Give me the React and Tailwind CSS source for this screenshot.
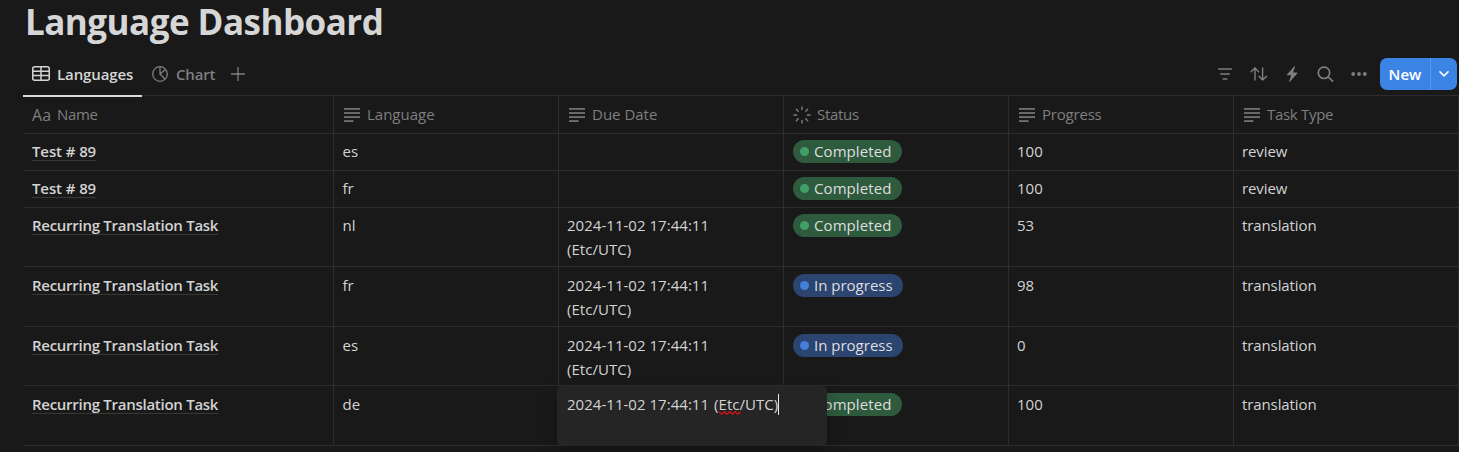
const LINE = 'border-[#2d2d2d]';

const rows = [
  { name: 'Test # 89', lang: 'es', due: '', status: 'Completed', progress: '100', type: 'review', h: 'h-[37px]', pad: 'pt-[5px]' },
  { name: 'Test # 89', lang: 'fr', due: '', status: 'Completed', progress: '100', type: 'review', h: 'h-[37px]', pad: 'pt-[5px]' },
  { name: 'Recurring Translation Task', lang: 'nl', due: '2024-11-02 17:44:11 (Etc/UTC)', status: 'Completed', progress: '53', type: 'translation', h: 'h-[59px]', pad: 'pt-[5px]' },
  { name: 'Recurring Translation Task', lang: 'fr', due: '2024-11-02 17:44:11 (Etc/UTC)', status: 'In progress', progress: '98', type: 'translation', h: 'h-[60px]', pad: 'pt-[6px]' },
  { name: 'Recurring Translation Task', lang: 'es', due: '2024-11-02 17:44:11 (Etc/UTC)', status: 'In progress', progress: '0', type: 'translation', h: 'h-[59px]', pad: 'pt-[6px]' },
  { name: 'Recurring Translation Task', lang: 'de', due: '', editing: true, status: 'Completed', progress: '100', type: 'translation', h: 'h-[60px]', pad: 'pt-[6px]' },
];

const GRID = 'grid grid-cols-[311px_225px_225px_225px_225px_225px] border-b ' + LINE;

function TextIcon() {
  return (
    <svg width="16" height="14" viewBox="0 0 16 14" className="shrink-0" fill="#737373">
      <rect x="0" y="0" width="16" height="1.8" />
      <rect x="0" y="4.1" width="16" height="1.8" />
      <rect x="0" y="8.2" width="16" height="1.8" />
      <rect x="0" y="12.2" width="9.5" height="1.8" />
    </svg>
  );
}

function StatusIcon() {
  return (
    <svg width="18" height="18" viewBox="-9 -9 18 18" className="-ml-px -mr-px shrink-0" stroke="#7f7f7f" strokeWidth="1.4" strokeLinecap="round">
      {[0, 45, 90, 135, 180, 225, 270, 315].map((a) => (
        <line key={a} x1="0" y1="-5.4" x2="0" y2="-8" transform={`rotate(${a})`} />
      ))}
    </svg>
  );
}

function HeadCell({ icon, label, spacing }) {
  return (
    <div className={`flex items-center gap-[7px] border-r pl-[10px] ${LINE}`}>
      {icon}
      <span className={`pb-[2px] ${spacing}`}>{label}</span>
    </div>
  );
}

function Pill({ status }) {
  const done = status === 'Completed';
  return (
    <span
      className={`mt-px flex h-[23px] items-center rounded-full pl-[7px] text-[#dedede] ${
        done ? 'w-[109px] bg-[#2e5a3e]' : 'w-[110px] bg-[#2b4470]'
      }`}
    >
      <span className={`mr-[5px] size-[9px] rounded-full ${done ? 'bg-[#419e66]' : 'bg-[#447fda]'}`} />
      <span className={`pb-[2px] leading-5 ${done ? 'tracking-[0.08px]' : 'tracking-[0px]'}`}>{status}</span>
    </span>
  );
}

function Editor() {
  return (
    <div className="absolute -left-[2px] top-0 z-10 h-[60px] w-[270px] rounded-[5px] bg-[#252525] pl-[10px] pt-[6px] shadow-[0_6px_16px_rgba(0,0,0,0.25)]">
      <div className="flex h-6 items-center whitespace-nowrap">
        <span className="tracking-[0.03px]">2024-11-02 17:44:11</span>
        <span className="ml-[5px] tracking-[0.03px]">(</span>
        <span className="relative tracking-[0.03px]">
          Etc
          <svg className="absolute left-0 top-[19px]" width="22" height="4" viewBox="0 0 22 4" fill="none" stroke="#e01010" strokeWidth="1.2">
            <path d="M0 .7 L2.7 3.2 L5.4 .7 L8.1 3.2 L10.8 .7 L13.5 3.2 L16.2 .7 L18.9 3.2 L21.6 .7" />
          </svg>
        </span>
        <span className="tracking-[0.03px]">/UTC)</span>
        <span className="h-[21px] w-px bg-[#e8e8e8]" />
      </div>
    </div>
  );
}

export default function App() {
  return (
    <div className="h-[452px] w-[1459px] overflow-hidden bg-[#191919] pl-[23px] font-['Open_Sans',sans-serif] text-[15px] leading-6 text-[#d3d3d3]">
      <h1 className="h-[52px] whitespace-nowrap pl-[2px] text-[35px] font-bold leading-[43px] tracking-[-0.53px] text-[#d6d6d6]">
        Language Dashboard
      </h1>

      <div className={`flex h-[44px] justify-between border-b ${LINE}`}>
        <div className="flex">
          <div className="-mb-[2px] flex w-[119px] items-center border-b-2 border-[#d8d8d8] pl-[9px]">
            <svg width="18" height="15" viewBox="0 0 18 15" fill="none" stroke="#d6d6d6" strokeWidth="1.5">
              <rect x=".75" y=".75" width="16.5" height="13.5" rx="2" />
              <path d="M1 5.2H17M1 9.6H17M9 1V14" />
            </svg>
            <span className="ml-[7px] font-semibold tracking-[-0.1px] text-[#d6d6d6]">Languages</span>
          </div>
          <div className="flex items-center pl-[10px] text-[#7f7f7f]">
            <svg width="16" height="16" viewBox="0 0 16 16" fill="none" stroke="currentColor" strokeWidth="1.3">
              <circle cx="8" cy="8" r="7.3" />
              <path d="M8 .7V8L13.2 13.2M8 8L13.6 3.4" />
            </svg>
            <span className="ml-2 font-semibold tracking-[-0.2px]">Chart</span>
            <svg className="ml-4" width="14" height="14" viewBox="0 0 14 14" stroke="currentColor" strokeWidth="1.3">
              <path d="M7 0V14M0 7H14" />
            </svg>
          </div>
        </div>

        <div className="flex items-center gap-[17px] pr-[2px] text-[#7f7f7f]">
          <svg width="14" height="12" viewBox="0 0 14 12" fill="none" stroke="currentColor" strokeWidth="1.4" strokeLinecap="round">
            <path d="M.7 1H13.3M2.8 6H11.2M5.2 11H8.8" />
          </svg>
          <svg className="ml-[1px]" width="18" height="14" viewBox="0 0 18 14" fill="none" stroke="currentColor" strokeWidth="1.4" strokeLinecap="round" strokeLinejoin="round">
            <path d="M5 13V1M1 4.8L5 1L8.6 4.8M12.6 1V13M9 9.2L12.6 13L16.6 9.2" />
          </svg>
          <svg className="mr-px" width="14" height="16" viewBox="0 0 14 16" fill="currentColor">
            <path d="M9.2.4L2 8.5C1.7 8.9 1.9 9.3 2.4 9.3H6.2L4.2 15C4 15.7 4.6 16 5.1 15.5L12.2 7.5C12.5 7.1 12.3 6.6 11.8 6.6H8L10 1C10.2.3 9.7 0 9.2.4Z" />
          </svg>
          <svg width="17" height="16" viewBox="0 0 17 16" fill="none" stroke="currentColor" strokeWidth="1.7" strokeLinecap="round">
            <circle cx="7" cy="6.8" r="5.7" />
            <path d="M11.2 11L15.6 15.1" />
          </svg>
          <svg width="16" height="4" viewBox="0 0 16 4" fill="currentColor">
            <circle cx="2.2" cy="2" r="1.9" />
            <circle cx="8" cy="2" r="1.9" />
            <circle cx="13.8" cy="2" r="1.9" />
          </svg>
          <button className="-ml-[4px] flex h-8 w-[77px] overflow-hidden rounded-[7px] bg-[#3b84e6] text-white">
            <span className="flex h-8 w-[51px] items-center justify-center border-r border-[#5d98ea] font-semibold tracking-[0.1px]">New</span>
            <span className="flex h-8 flex-1 items-center justify-center">
              <svg width="10" height="6" viewBox="0 0 10 6" fill="none" stroke="currentColor" strokeWidth="1.5" strokeLinecap="round" strokeLinejoin="round">
                <path d="M1 .9L5 4.9L9 .9" />
              </svg>
            </span>
          </button>
        </div>
      </div>

      <div className={`${GRID} h-[38px] text-[#7f7f7f]`}>
        <div className={`flex items-center border-r pl-[9px] ${LINE}`}>
          <span className="w-[25px] text-[16px] tracking-[0.2px]">Aa</span>
          <span className="pb-[2px] tracking-[-0.3px]">Name</span>
        </div>
        <HeadCell icon={<TextIcon />} label="Language" spacing="tracking-[0px]" />
        <HeadCell icon={<TextIcon />} label="Due Date" spacing="tracking-[0px]" />
        <HeadCell icon={<StatusIcon />} label="Status" spacing="tracking-[-0.3px]" />
        <HeadCell icon={<TextIcon />} label="Progress" spacing="tracking-[-0.2px]" />
        <HeadCell icon={<TextIcon />} label="Task Type" spacing="tracking-[-0.3px]" />
      </div>

      {rows.map((r, i) => (
        <div key={i} className={`${GRID} ${r.h}`}>
          <div className={`border-r pl-[9px] ${r.pad} ${LINE}`}>
            <span
              className={`inline-block h-[22px] whitespace-nowrap border-b border-[#383838] font-semibold leading-6 ${
                r.name.length < 12 ? 'tracking-[-0.1px]' : 'tracking-[-0.27px]'
              }`}
            >
              {r.name}
            </span>
          </div>
          <div className={`border-r pl-[8.5px] ${r.pad} ${LINE}`}>{r.lang}</div>
          <div className={`relative border-r pl-[8px] pr-[60px] tracking-[0.03px] ${r.pad} ${LINE}`}>
            {r.editing ? <Editor /> : r.due}
          </div>
          <div className={`border-r pl-[9px] ${r.pad} ${LINE}`}>
            <Pill status={r.status} />
          </div>
          <div className={`border-r pl-[8px] ${r.pad} ${LINE}`}>{r.progress}</div>
          <div className={`border-r pl-[8px] tracking-[-0.1px] ${r.pad} ${LINE}`}>{r.type}</div>
        </div>
      ))}
    </div>
  );
}
